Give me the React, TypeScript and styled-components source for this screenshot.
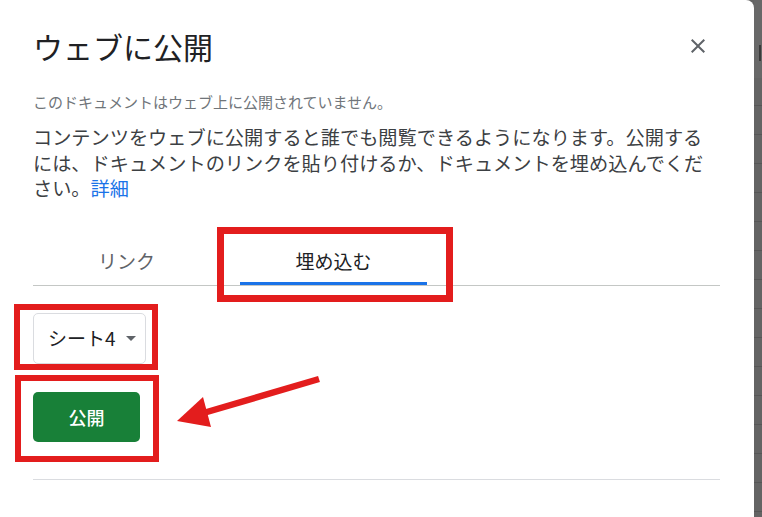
import React from 'react';
import styled, { createGlobalStyle } from 'styled-components';

const GlobalStyle = createGlobalStyle`
    html, body {
        margin: 0;
        padding: 0;
        background: #646464;
    }
    body {
        font-family: "Noto Sans CJK JP", "Noto Sans", sans-serif;
    }
`;

const Page = styled.div`
    position: relative;
    display: flex;
    width: 762px;
    height: 517px;
    overflow: hidden;
`;

const Dialog = styled.div`
    width: 754px;
    height: 517px;
    box-sizing: border-box;
    padding: 28px 34px 0 33px;
    background: #fff;
    border-top-right-radius: 8px;
    display: flex;
    flex-direction: column;
`;

const Strip = styled.div`
    flex: 1;
    display: flex;
    flex-direction: column;
`;

const StripTop = styled.div`
    height: 78px;
    background: #686868;
    display: flex;
    justify-content: flex-end;
    padding-top: 45px;
    box-sizing: border-box;
`;

const StripMark = styled.div`
    width: 2px;
    height: 16px;
    margin-right: 1px;
    background: #3a3a3a;
`;

const StripLines = styled.div`
    flex: 1;
    background: repeating-linear-gradient(
        to bottom,
        transparent 0 27px,
        #565656 27px 28px,
        transparent 28px 29px
    );
`;

const TitleRow = styled.div`
    display: flex;
    justify-content: space-between;
    align-items: center;
    height: 36px;
`;

const Title = styled.h1`
    margin: 0;
    font-size: 30px;
    line-height: 36px;
    font-weight: 400;
    color: #202124;
`;

const CloseButton = styled.button`
    width: 24px;
    height: 24px;
    margin-right: 10px;
    padding: 0;
    border: none;
    background: none;
    display: flex;
    align-items: center;
    justify-content: center;
    color: #5f6368;
    cursor: pointer;
`;

const Status = styled.p`
    margin: 28px 0 0;
    font-size: 15px;
    line-height: 20px;
    color: #70757a;
`;

const Description = styled.p`
    margin: 13px 0 0;
    font-size: 19.2px;
    line-height: 25.6px;
    color: #3c4043;
`;

const Link = styled.a`
    color: #1a73e8;
    text-decoration: none;
`;

const TabList = styled.div`
    display: flex;
    gap: 20px;
    margin-top: 27px;
    border-bottom: 1px solid #c4c7c5;
`;

const Tab = styled.div<{ $active?: boolean }>`
    position: relative;
    width: 187px;
    height: 56px;
    box-sizing: border-box;
    padding-top: 20px;
    text-align: center;
    font-size: 19px;
    line-height: 24px;
    color: ${(p) => (p.$active ? '#202124' : '#5f6368')};

    &::after {
        content: '';
        display: ${(p) => (p.$active ? 'block' : 'none')};
        position: absolute;
        left: 0;
        right: 0;
        bottom: 0;
        height: 3px;
        background: #1a73e8;
    }
`;

const Select = styled.div`
    align-self: flex-start;
    display: flex;
    align-items: center;
    gap: 10px;
    margin-top: 27px;
    height: 51px;
    box-sizing: border-box;
    padding: 0 9px 0 14px;
    border: 1px solid #dadce0;
    border-radius: 5px;
    font-size: 19px;
    line-height: 24px;
    color: #202124;
    white-space: nowrap;
`;

const Caret = styled.span`
    flex: none;
    width: 0;
    height: 0;
    border-left: 5.5px solid transparent;
    border-right: 5.5px solid transparent;
    border-top: 5px solid #5f6368;
`;

const PublishButton = styled.button`
    align-self: flex-start;
    margin-top: 28px;
    width: 107px;
    height: 50px;
    border: none;
    border-radius: 5px;
    background: #188038;
    color: #fff;
    font-family: inherit;
    font-size: 18px;
    font-weight: 500;
    cursor: pointer;
`;

const Divider = styled.hr`
    margin: 37px 0 0;
    border: none;
    border-top: 1px solid #dadce0;
`;

const Mark = styled.div<{ $x: number; $y: number; $w: number; $h: number; $t: number }>`
    position: absolute;
    left: ${(p) => p.$x}px;
    top: ${(p) => p.$y}px;
    width: ${(p) => p.$w}px;
    height: ${(p) => p.$h}px;
    box-sizing: border-box;
    border: ${(p) => p.$t}px solid #e31d1d;
    pointer-events: none;
`;

const ArrowLayer = styled.svg`
    position: absolute;
    left: 0;
    top: 0;
    pointer-events: none;
`;

//------------------Component------------------
const App = () => {
    return (
        <>
            <GlobalStyle />
            <Page>
                <Dialog>
                    <TitleRow>
                        <Title>ウェブに公開</Title>
                        <CloseButton aria-label="閉じる">
                            <svg width="24" height="24" viewBox="0 0 24 24">
                                <path
                                    fill="currentColor"
                                    d="M19 6.41L17.59 5 12 10.59 6.41 5 5 6.41 10.59 12 5 17.59 6.41 19 12 13.41 17.59 19 19 17.59 13.41 12z"
                                />
                            </svg>
                        </CloseButton>
                    </TitleRow>
                    <Status>このドキュメントはウェブ上に公開されていません。</Status>
                    <Description>
                        コンテンツをウェブに公開すると誰でも閲覧できるようになります。公開するには、ドキュメントのリンクを貼り付けるか、ドキュメントを埋め込んでください。
                        <Link href="#">詳細</Link>
                    </Description>
                    <TabList>
                        <Tab>リンク</Tab>
                        <Tab $active>埋め込む</Tab>
                    </TabList>
                    <Select>
                        <span>シート4</span>
                        <Caret />
                    </Select>
                    <PublishButton>公開</PublishButton>
                    <Divider />
                </Dialog>
                <Strip>
                    <StripTop>
                        <StripMark />
                    </StripTop>
                    <StripLines />
                </Strip>

                <Mark $x={217} $y={227} $w={236} $h={75} $t={7} />
                <Mark $x={14} $y={304} $w={144} $h={66} $t={6} />
                <Mark $x={15} $y={375} $w={144} $h={87} $t={6} />
                <ArrowLayer width="762" height="517" viewBox="0 0 762 517">
                    <line x1="319" y1="379" x2="200" y2="414" stroke="#e31d1d" strokeWidth="6.5" />
                    <polygon points="177,421 203,397 211,427" fill="#e31d1d" />
                </ArrowLayer>
            </Page>
        </>
    );
};

export default App;
